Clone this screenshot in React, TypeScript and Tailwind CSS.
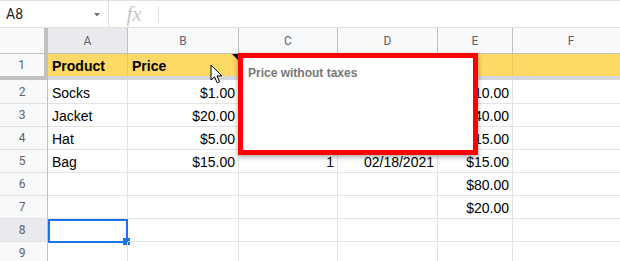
import React from "react";

const colW = ["w-[80px]", "w-[111px]", "w-[99px]", "w-[100px]", "w-[75px]", "w-[117px]"];

const data: { n: number; cells: string[] }[] = [
  { n: 2, cells: ["Socks", "$1.00", "10", "02/10/2021", "$10.00", ""] },
  { n: 3, cells: ["Jacket", "$20.00", "2", "02/12/2021", "$40.00", ""] },
  { n: 4, cells: ["Hat", "$5.00", "3", "02/15/2021", "$15.00", ""] },
  { n: 5, cells: ["Bag", "$15.00", "1", "02/18/2021", "$15.00", ""] },
  { n: 6, cells: ["", "", "", "", "$80.00", ""] },
  { n: 7, cells: ["", "", "", "", "$20.00", ""] },
  { n: 8, cells: ["", "", "", "", "", ""] },
  { n: 9, cells: ["", "", "", "", "", ""] },
];

export default function App() {
  return (
    <div className="relative w-[620px] h-[261px] overflow-hidden bg-white font-['Liberation_Sans',Arial,sans-serif] text-black">
      {/* Formula bar */}
      <div className="flex h-[28px] border-t border-b border-[#e0e0e0] bg-white">
        <div className="flex w-[109px] items-center justify-between border-r border-[#e0e0e0] pl-[6px] pr-[8px]">
          <span className="font-['Roboto',sans-serif] text-[14px] leading-none text-[#202124]">A8</span>
          <svg width="6" height="4" viewBox="0 0 6 4" className="mt-[1px]">
            <polygon points="0,0 6,0 3,3.5" fill="#6b6f73" />
          </svg>
        </div>
        <div className="flex w-[49px] items-center justify-center">
          <span className="font-['Liberation_Serif',serif] text-[21px] italic leading-none text-[#c4c7c9] pl-[1px]">fx</span>
        </div>
        <div className="my-[5px] w-px bg-[#dadce0]" />
      </div>

      {/* Column header */}
      <div className="flex h-[26px] border-b border-[#c0c0c0] bg-[#f8f9fa] font-['Roboto',sans-serif] text-[12px] text-[#5f6368]">
        <div className="w-[48px] shrink-0 border-r-4 border-[#c0c0c0]" />
        {["A", "B", "C", "D", "E", "F"].map((l, i) => (
          <div
            key={l}
            className={`${colW[i]} shrink-0 flex items-center justify-center border-r border-[#c0c0c0] ${i === 0 ? "bg-[#e8eaed]" : ""}`}
          >
            {l}
          </div>
        ))}
      </div>

      {/* Row 1 */}
      <div className="flex h-[22px]">
        <div className="w-[48px] shrink-0 flex items-center justify-center border-r-4 border-[#c0c0c0] bg-[#f8f9fa] pr-[1px] font-['Roboto',sans-serif] text-[12px] text-[#5f6368]">
          1
        </div>
        {["Product", "Price", "", "", "", ""].map((t, i) => (
          <div
            key={i}
            className={`${colW[i]} relative shrink-0 flex items-end border-r border-[#ecc65a] bg-[#ffd966] pl-[4px] pb-[2px] text-[14px] font-bold leading-[16px]`}
          >
            {t}
            {i === 1 && (
              <svg width="6" height="6" viewBox="0 0 6 6" className="absolute right-0 top-0">
                <polygon points="0,0 6,0 6,6" fill="#000" />
              </svg>
            )}
          </div>
        ))}
      </div>

      {/* Frozen separator */}
      <div className="flex h-[4px]">
        <div className="w-[48px] shrink-0 bg-[#c0c0c0]" />
        <div className="flex-1 bg-[#d3d6da]" />
      </div>

      {/* Data rows */}
      {data.map((r) => (
        <div key={r.n} className={`flex ${r.n === 2 ? "h-[24px]" : "h-[23px]"}`}>
          <div
            className={`w-[48px] shrink-0 flex items-center justify-center border-r border-b border-r-[#c0c0c0] border-b-[#e0e0e0] pr-[3px] font-['Roboto',sans-serif] text-[12px] text-[#5f6368] ${r.n === 8 ? "bg-[#e8eaed]" : "bg-[#f8f9fa]"}`}
          >
            {r.n}
          </div>
          {r.cells.map((t, i) => (
            <div
              key={i}
              className={`${colW[i]} relative shrink-0 flex items-end border-r border-b border-[#e2e3e3] pb-[2px] text-[14px] leading-[16px] ${i === 0 ? "justify-start pl-[4px]" : "justify-end pr-[3px]"}`}
            >
              {t}
              {r.n === 8 && i === 0 && (
                <div className="absolute left-0 top-0 h-[24px] w-[80px] border-2 border-[#1a73e8]">
                  <div className="absolute -bottom-[4px] -right-[4px] h-[7px] w-[7px] bg-[#1a73e8]" />
                </div>
              )}
            </div>
          ))}
        </div>
      ))}

      {/* Note */}
      <div className="absolute left-[238px] top-[53px] h-[102px] w-[240px] border-[5px] border-[#ff0000] bg-white pl-[5px] pt-[2px] shadow-[0_2px_5px_rgba(0,0,0,0.35)]">
        <span className="text-[12px] font-bold leading-[14px] text-[#777777]">Price without taxes</span>
      </div>

      {/* Cursor */}
      <svg className="absolute left-[210px] top-[64px]" width="14" height="20" viewBox="0 0 14 20">
        <path d="M1 1 L1 16 L4.5 12.8 L7.2 18.8 L9.6 17.8 L7 11.9 L11.8 11.9 Z" fill="#fff" stroke="#000" strokeWidth="1" strokeLinejoin="round" />
      </svg>
    </div>
  );
}
